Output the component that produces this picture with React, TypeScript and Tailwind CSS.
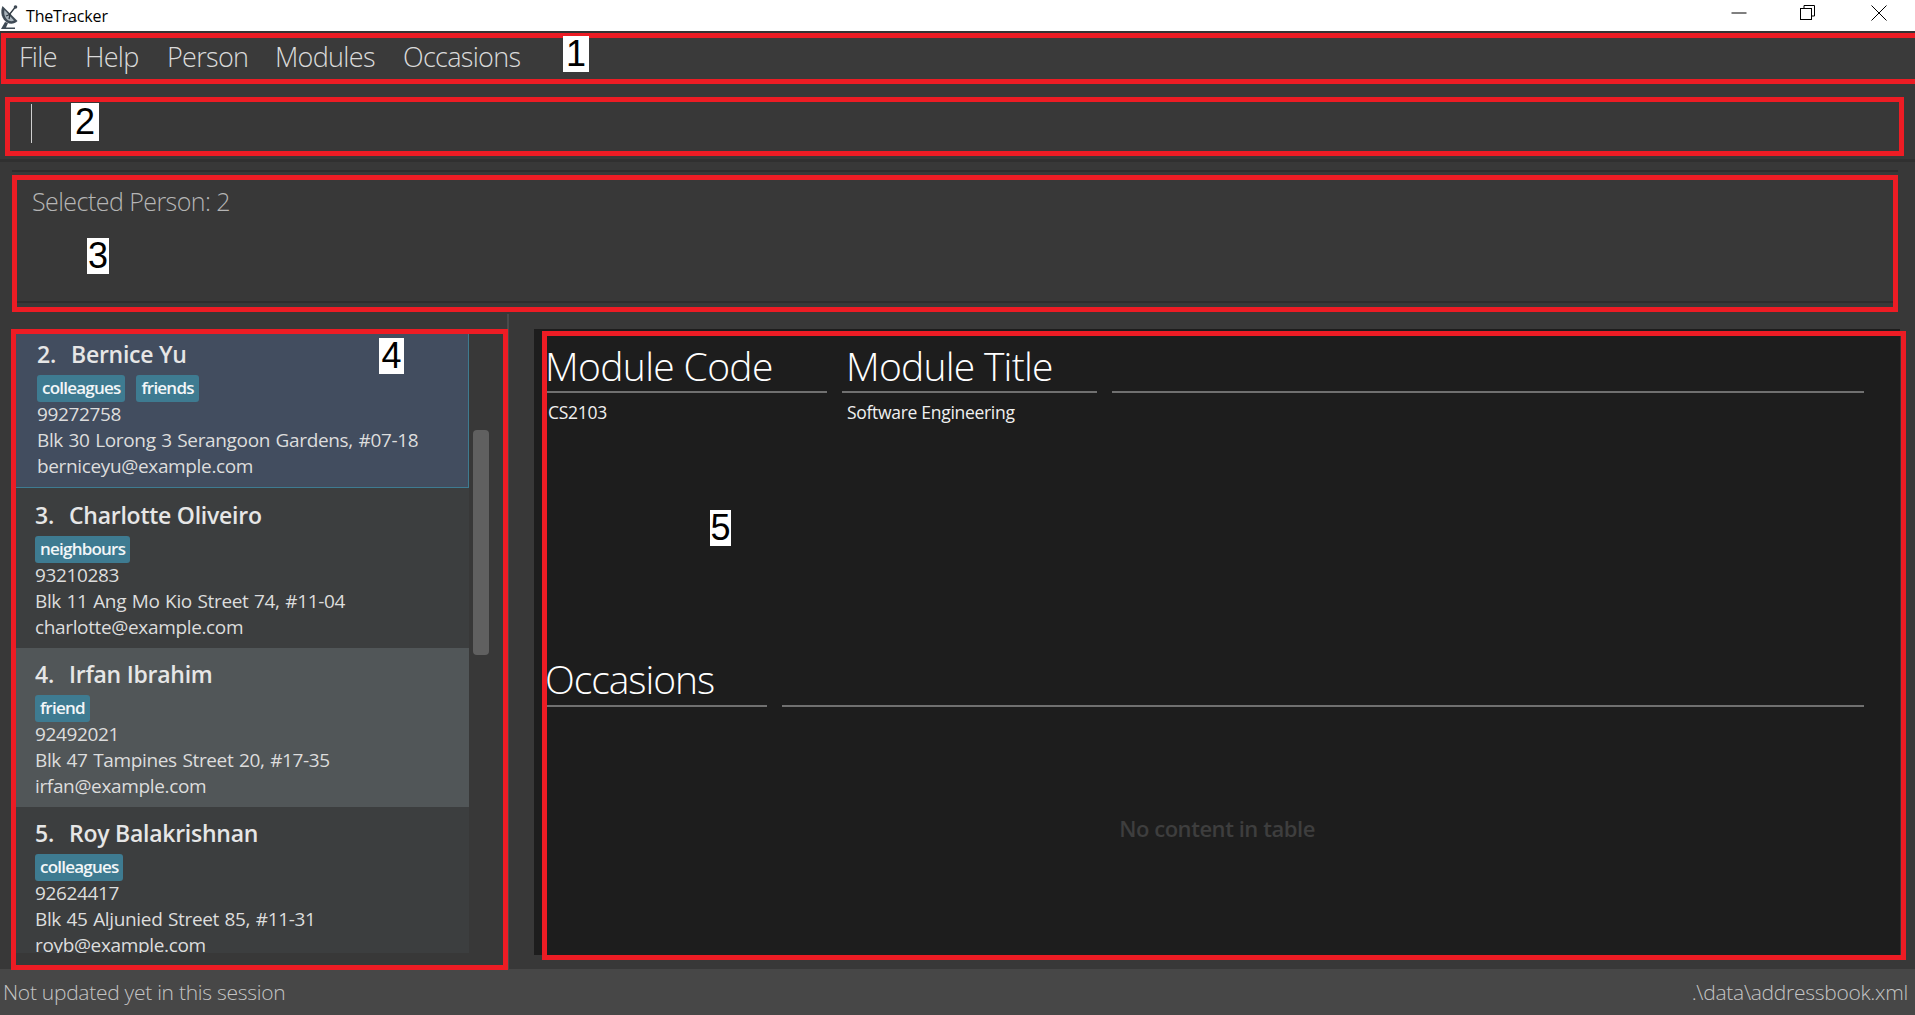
import React from "react";

const tagCls = "h-[27px] px-[5px] rounded-[3px] bg-[#3e7b91] text-[#f2f6f8] text-[17px] font-semibold leading-[26px] tracking-[-0.78px]";
const lineCls = "h-[26px] leading-[26px] text-[19px] font-normal text-[#dddddd] whitespace-nowrap tracking-[-0.35px] [word-spacing:1px]";

function Card({ no, name, tags, phone, addr, email, cls, pt, pl }: { no: string; name: string; tags: string[]; phone: string; addr: string; email: string; cls: string; pt: string; pl: string }) {
  return (
    <div className={`w-[453px] shrink-0 overflow-hidden ${cls} ${pt} ${pl}`}>
      <div className="h-[28px] leading-[26px] text-[23px] font-semibold text-[#e6e6e6] whitespace-nowrap tracking-[-0.25px] flex">
        <span className="w-[34px]">{no}</span>
        <span>{name}</span>
      </div>
      <div className="mt-[6px] mb-[-1px] flex gap-[11px]">
        {tags.map((t) => (
          <div key={t} className={tagCls}>{t}</div>
        ))}
      </div>
      <div className={lineCls}>{phone}</div>
      <div className={lineCls}>{addr}</div>
      <div className={lineCls}>{email}</div>
    </div>
  );
}

function Red({ cls }: { cls: string }) {
  return <div className={`absolute border-[5px] border-[#ed1c24] ${cls}`} />;
}

function Num({ cls, children }: { cls: string; children: React.ReactNode }) {
  return (
    <div className={`absolute bg-white text-black flex items-center justify-center font-['Liberation_Sans',sans-serif] text-[36px] leading-none ${cls}`}>
      {children}
    </div>
  );
}

export default function App() {
  return (
    <div className="relative w-[1915px] h-[1015px] overflow-hidden bg-[#383838] flex flex-col font-['Open_Sans',sans-serif]">
      {/* title bar */}
      <div className="h-[31px] shrink-0 bg-white flex items-center">
        <svg width="20" height="26" viewBox="0 0 20 26" className="shrink-0 mt-[2px]">
          <path d="M2.5 2 C0 8 1.5 15 7 18.5 C10.5 20.5 14.5 20 17.5 17 Z" fill="#3f4a55" />
          <path d="M4.5 6 C3.5 10 5 14.5 8.5 16.5 C10.5 17.5 12.5 17.5 14 16.5 Z" fill="#a9b3bb" />
          <path d="M9 11 L15 3.5 M6 12 L11 10 M9 15 L10 11" stroke="#2f3942" strokeWidth="1.3" fill="none" />
          <circle cx="15.5" cy="3" r="1.8" fill="#3f4a55" />
          <path d="M5 18 L1 25 H15 V23.5 H6 L8 19 Z" fill="#3f4a55" />
        </svg>
        <span className="ml-[6px] text-[16px] text-black tracking-[-0.17px]">TheTracker</span>
        <div className="ml-auto flex items-center h-full">
          <svg width="16" height="16" viewBox="0 0 16 16" className="mb-[5px]"><path d="M0.5 8 H15.5" stroke="#000" strokeWidth="1" /></svg>
          <svg width="16" height="16" viewBox="0 0 16 16" className="ml-[53px] mb-[5px]">
            <rect x="0.5" y="3.5" width="11" height="11" fill="none" stroke="#000" />
            <path d="M4 3.5 V0.5 H14.5 V11 H11.5" fill="none" stroke="#000" />
          </svg>
          <svg width="16" height="16" viewBox="0 0 16 16" className="ml-[55px] mr-[28px] mb-[5px]"><path d="M0.5 0.5 L15.5 15.5 M15.5 0.5 L0.5 15.5" stroke="#000" strokeWidth="1" /></svg>
        </div>
      </div>

      {/* menu */}
      <div className="h-[53px] shrink-0 bg-[#3a3a3a] pl-[19px] pb-[2px] flex items-center text-[27px] font-light text-[#dadada] tracking-[-0.7px] border-t-2 border-[#333333]">
        <span className="w-[66px]">File</span>
        <span className="w-[82px]">Help</span>
        <span className="w-[108px]">Person</span>
        <span className="w-[128px]">Modules</span>
        <span>Occasions</span>
      </div>

      {/* command */}
      <div className="h-[78px] shrink-0 pt-[20px] pl-[31px] border-b-[3px] border-[#303030]">
        <div className="w-px h-[39px] bg-[#d0d0d0]" />
      </div>

      {/* result */}
      <div className="h-[152px] shrink-0 pt-[8px] pl-[12px] pr-[17px]">
        <div className="h-[133px] border-t-2 border-b-2 border-[#2d2d2d] pl-[20px] pt-[12px] text-[25px] font-light text-[#b5b5b5] tracking-[-0.55px] leading-[34px]">
          Selected Person: 2
        </div>
      </div>

      {/* body */}
      <div className="flex-1 min-h-0 flex">
        <div className="w-[509px] shrink-0 border-r-2 border-[#4a4a4a] pl-[16px] pt-[20px] pb-[16px] flex">
          <div className="w-[453px] flex flex-col overflow-hidden">
            <Card no="2." name="Bernice Yu" tags={["colleagues", "friends"]} phone="99272758" addr="Blk 30 Lorong 3 Serangoon Gardens, #07-18" email="berniceyu@example.com" cls="h-[154px] bg-[#424d5f] border-r border-b border-[#3e7b91]" pt="pt-[7px]" pl="pl-[21px]" />
            <Card no="3." name="Charlotte Oliveiro" tags={["neighbours"]} phone="93210283" addr="Blk 11 Ang Mo Kio Street 74, #11-04" email="charlotte@example.com" cls="h-[160px] bg-[#3c3e3f]" pt="pt-[14px]" pl="pl-[19px]" />
            <Card no="4." name="Irfan Ibrahim" tags={["friend"]} phone="92492021" addr="Blk 47 Tampines Street 20, #17-35" email="irfan@example.com" cls="h-[159px] bg-[#515658]" pt="pt-[13px]" pl="pl-[19px]" />
            <Card no="5." name="Roy Balakrishnan" tags={["colleagues"]} phone="92624417" addr="Blk 45 Aljunied Street 85, #11-31" email="royb@example.com" cls="h-[146px] bg-[#3c3e3f]" pt="pt-[13px]" pl="pl-[19px]" />
          </div>
          <div className="ml-[4px] mt-[96px] w-[16px] h-[225px] rounded-[4px] bg-[#606060]" />
        </div>

        <div className="ml-[25px] w-[1366px] mt-[15px] mb-[14px] bg-[#1d1d1d] flex flex-col text-white">
          <div className="h-[314px] shrink-0">
            <div className="flex gap-[15px] pl-[8px] h-[64px]">
              <div className="w-[285px] border-b-2 border-[#707070] pl-[3px] text-[39px] font-light leading-[74px] tracking-[-0.65px] whitespace-nowrap">Module Code</div>
              <div className="w-[255px] border-b-2 border-[#707070] pl-[4px] text-[39px] font-light leading-[74px] tracking-[-0.75px] whitespace-nowrap">Module Title</div>
              <div className="w-[752px] border-b-2 border-[#707070]" />
            </div>
            <div className="flex pl-[14px] mt-[7px] text-[17.5px] leading-[24px] text-[#f0f0f0] tracking-[-0.3px]">
              <span className="w-[299px]">CS2103</span>
              <span>Software Engineering</span>
            </div>
          </div>
          <div className="flex gap-[15px] pl-[8px] h-[64px] shrink-0">
            <div className="w-[225px] border-b-2 border-[#707070] pl-[3px] text-[39px] font-light leading-[72px] tracking-[-1.05px]">Occasions</div>
            <div className="w-[1082px] border-b-2 border-[#707070]" />
          </div>
          <div className="flex-1 flex items-center justify-center pb-[6px] text-[22px] font-semibold text-[#3e3e3e] tracking-[-0.45px]">
            No content in table
          </div>
        </div>
      </div>

      {/* status */}
      <div className="h-[46px] shrink-0 bg-[#474747] pl-[3px] pr-[7px] pt-[2px] flex items-center justify-between text-[21px] font-light text-[#c4c4c4] tracking-[-0.28px]">
        <span>Not updated yet in this session</span>
        <span>.\data\addressbook.xml</span>
      </div>

      {/* annotation overlays */}
      <Red cls="left-[1px] top-[33px] w-[1930px] h-[51px]" />
      <Red cls="left-[5px] top-[97px] w-[1899px] h-[59px]" />
      <Red cls="left-[12px] top-[175px] w-[1886px] h-[137px]" />
      <Red cls="left-[11px] top-[329px] w-[497px] h-[641px]" />
      <Red cls="left-[542px] top-[331px] w-[1364px] h-[629px]" />
      <Num cls="left-[563px] top-[36px] w-[26px] h-[36px]">1</Num>
      <Num cls="left-[71px] top-[103px] w-[28px] h-[38px]">2</Num>
      <Num cls="left-[87px] top-[238px] w-[22px] h-[36px]">3</Num>
      <Num cls="left-[379px] top-[338px] w-[25px] h-[36px]">4</Num>
      <Num cls="left-[710px] top-[510px] w-[21px] h-[36px]">5</Num>
    </div>
  );
}
